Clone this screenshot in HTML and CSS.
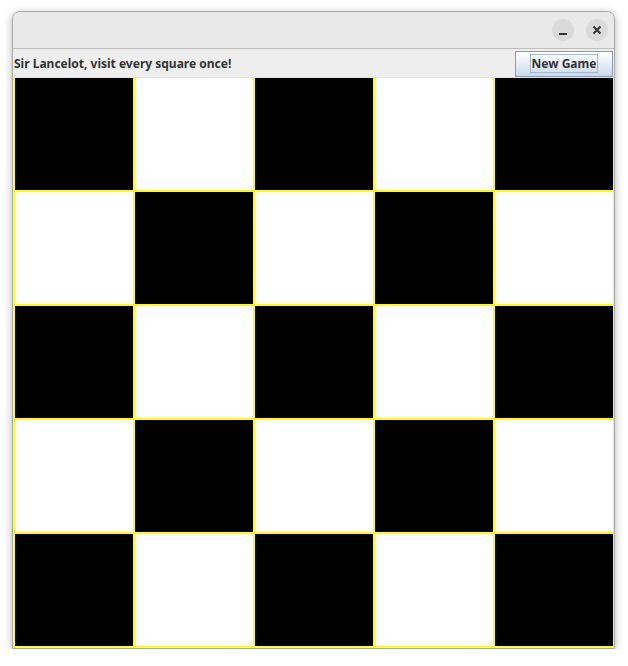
FILE: index.html
```html
<!DOCTYPE html>
<html>
<head>
<meta charset="utf-8">
<link rel="stylesheet" href="styles.css">
</head>
<body>
<div class="window">
  <div class="titlebar">
    <button class="wbtn" aria-label="Minimize">
      <svg width="22" height="22" viewBox="0 0 22 22"><rect x="7" y="14" width="8" height="2" fill="#333"/></svg>
    </button>
    <button class="wbtn" aria-label="Close">
      <svg width="22" height="22" viewBox="0 0 22 22"><path d="M7.5 7.5 L14.5 14.5 M14.5 7.5 L7.5 14.5" stroke="#333" stroke-width="2" fill="none"/></svg>
    </button>
  </div>
  <div class="toolbar">
    <span class="msg">Sir Lancelot, visit every square once!</span>
    <button class="newgame"><span class="focus">New Game</span></button>
  </div>
  <div class="board">
    <div class="cell b"></div><div class="cell w"></div><div class="cell b"></div><div class="cell w"></div><div class="cell b"></div>
    <div class="cell w"></div><div class="cell b"></div><div class="cell w"></div><div class="cell b"></div><div class="cell w"></div>
    <div class="cell b"></div><div class="cell w"></div><div class="cell b"></div><div class="cell w"></div><div class="cell b"></div>
    <div class="cell w"></div><div class="cell b"></div><div class="cell w"></div><div class="cell b"></div><div class="cell w"></div>
    <div class="cell b"></div><div class="cell w"></div><div class="cell b"></div><div class="cell w"></div><div class="cell b"></div>
  </div>
  <div class="bottom"></div>
</div>
</body>
</html>
```
FILE: styles.css
```css
html, body {
  margin: 0;
  padding: 0;
  background: #ffffff;
}
body {
  padding: 11px 0 0 12px;
  font-family: "Noto Sans", "Open Sans", "DejaVu Sans", sans-serif;
}
.window {
  width: 601px;
  border: 1px solid #a9a9a9;
  border-radius: 8px 8px 0 0;
  background: #eeeeee;
  box-shadow: 0 2px 8px rgba(0, 0, 0, 0.3);
  overflow: hidden;
}
.titlebar {
  height: 36px;
  background: #e9e9e9;
  border-bottom: 1px solid #bdbdbd;
  display: flex;
  justify-content: flex-end;
  align-items: center;
  gap: 12px;
  padding-right: 6px;
}
.wbtn {
  width: 22px;
  height: 22px;
  border-radius: 50%;
  border: none;
  padding: 0;
  background: #dadada;
  display: flex;
  align-items: center;
  justify-content: center;
}
.wbtn svg {
  display: block;
}
.toolbar {
  height: 28px;
  display: flex;
  align-items: center;
  justify-content: space-between;
  padding-left: 1px;
  padding-right: 1px;
  background: #eeeeee;
}
.msg {
  font-size: 12px;
  font-weight: bold;
  color: #333333;
}
.newgame {
  width: 98px;
  height: 26px;
  margin-top: 1px;
  border: 1px solid #8a9bb0;
  background: linear-gradient(#ffffff, #e6eef6 50%, #c9d9e9);
  padding: 0;
  display: flex;
  align-items: center;
  justify-content: center;
  font-family: "Noto Sans", "Open Sans", sans-serif;
  font-size: 12px;
  font-weight: bold;
  color: #333333;
}
.focus {
  border: 1px solid #a3b8cc;
  padding: 0 1px;
  line-height: 17px;
}
.board {
  margin-left: 1px;
  width: 600px;
  display: grid;
  grid-template-columns: repeat(5, 120px);
  grid-template-rows: repeat(5, 114px);
}
.cell {
  box-sizing: border-box;
  border: 1px solid #ffff00;
}
.cell.b {
  background: #000000;
}
.cell.w {
  background: #ffffff;
}
.bottom {
  height: 1px;
  background: #eeeeee;
}
```
